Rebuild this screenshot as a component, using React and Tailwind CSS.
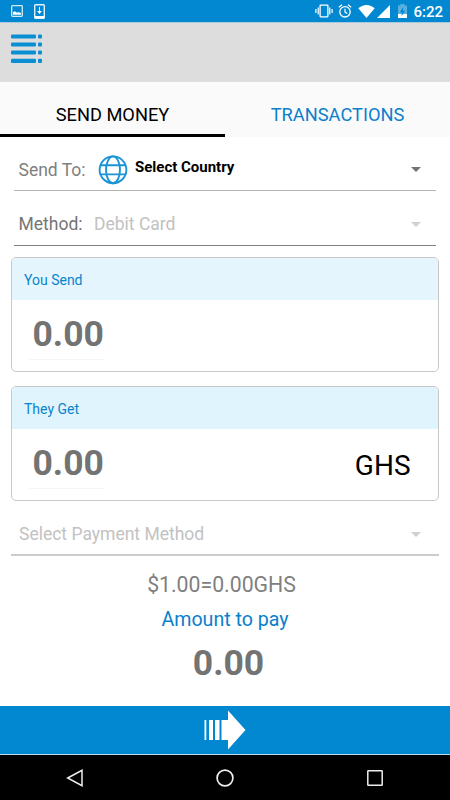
import React from 'react';

const StatusBar = () => (
  <div className="flex h-[22px] items-center bg-[#0288d0] pr-[7px] pl-[11px] text-white">
    <svg className="mr-[11px] h-3 w-3" viewBox="0 0 12 12" fill="none">
      <rect x="0.7" y="0.7" width="10.6" height="10.6" rx="0.8" stroke="#d3eaf7" strokeWidth="1.3" />
      <path d="M2 9.8V7.2l2-.9 2 1.4 1-.7L10 8v1.8z" fill="#fff" />
    </svg>
    <svg className="h-[15px] w-[11px]" viewBox="0 0 11 15" fill="none">
      <rect x="0.7" y="0.7" width="9.6" height="13.6" rx="0.8" stroke="#e3f2fa" strokeWidth="1.4" />
      <path d="M1 12h9v2H1z" fill="#fff" />
      <path d="M5 3h1v4h2L5.5 10 3 7h2z" fill="#fff" />
    </svg>
    <div className="flex-1" />
    <svg className="mr-[5px] h-[14px] w-[18px]" viewBox="0 0 18 14" fill="none" stroke="#fff">
      <rect x="5.1" y="1.2" width="7.8" height="11.6" rx="0.5" strokeWidth="1.3" />
      <path d="M3.2 3.5v7M14.8 3.5v7M0.9 5v4M17.1 5v4" strokeWidth="1.2" />
    </svg>
    <svg className="mr-[6px] h-[14px] w-[14px]" viewBox="0 0 14 14" fill="none" stroke="#fff">
      <circle cx="7" cy="7.8" r="5.2" strokeWidth="1.3" />
      <path d="M0.8 3.3L4 0.7M13.2 3.3L10 0.7M7 4.7v3.4l2.3 1.4" strokeWidth="1.2" />
    </svg>
    <svg className="mr-[2px] h-[13px] w-[17px]" viewBox="0 0 17 13">
      <path d="M0.3 3.3C2.5 1.3 5.4 0 8.5 0s6 1.3 8.2 3.3L8.5 13z" fill="#fff" />
    </svg>
    <svg className="mr-[8px] h-[13px] w-[13px]" viewBox="0 0 13 13">
      <path d="M13 0v13H0z" fill="#fff" />
    </svg>
    <svg className="mr-[6px] h-[14px] w-[9px]" viewBox="0 0 9 14">
      <path d="M0 1.5h2.5V0h4v1.5H9V10H0z" fill="#59b0df" />
      <path d="M0 10h9v4H0z" fill="#fff" />
      <path d="M5.3 3L1.9 8.2h2L3.6 12 7.2 6.8H5.1z" fill="#0288d0" />
    </svg>
    <span className="pt-[2px] text-[15px] leading-5 font-medium">6:22</span>
  </div>
);

const MenuIcon = () => (
  <svg className="h-[30px] w-8" viewBox="0 0 32 30" fill="#0b8fd4">
    {[0.4, 8.4, 16.4, 24.8].map((y) => (
      <g key={y}>
        <rect x="0" y={y} width="25" height="4.2" rx="1" />
        <rect x="27" y={y} width="4" height="4.2" rx="1" />
      </g>
    ))}
  </svg>
);

const Globe = () => (
  <svg className="h-[30px] w-[30px]" viewBox="0 0 30 30" fill="none" stroke="#1a94d6" strokeWidth="1.9">
    <circle cx="15" cy="14.8" r="13.4" />
    <ellipse cx="15" cy="14.8" rx="7" ry="13.4" />
    <path d="M2.6 10.2h24.8M2.6 19.4h24.8" />
  </svg>
);

const Caret = ({ className }) => (
  <svg className={`h-[5px] w-[10px] ${className}`} viewBox="0 0 10 5" fill="currentColor">
    <path d="M0 0h10L5 5z" />
  </svg>
);

const AmountCard = ({ title, titleClass, currency }) => (
  <div className="mx-[11px] h-[115px] overflow-hidden rounded-[5px] border border-[#c8c8c8] bg-white">
    <div className={`flex h-[42px] items-center pl-3 pt-[2px] text-[14px] text-[#0a84cc] ${titleClass}`}>
      {title}
    </div>
    <div className="flex items-start justify-between pr-[27.5px] pl-[17px]">
      <div className="h-[60px] w-[75px] border-b border-[#f5f5f5] pl-[3.5px] text-[35.5px] leading-[69px] font-bold text-[#737373]">
        0.00
      </div>
      {currency && <div className="text-[28px] leading-[73px] text-black">{currency}</div>}
    </div>
  </div>
);

const App = () => {
  return (
    <div className="flex h-[800px] w-[450px] flex-col overflow-hidden bg-white font-['Roboto',sans-serif]">
      <StatusBar />
      <header className="h-[60px] border-t border-[#a9c9dc] bg-[#dddddd] pt-[11px] pl-[11px]">
        <MenuIcon />
      </header>

      <nav className="flex h-[55px] bg-[#fafafa] text-[18.25px] leading-[66px]">
        <div className="w-[225px] border-b-[3px] border-black text-center text-black">SEND MONEY</div>
        <div className="w-[225px] text-center text-[#0a80cc]">TRANSACTIONS</div>
      </nav>

      <div className="mx-[14px] flex h-[54px] items-center border-b border-[#b5b5b5] pt-3 pl-1 text-[#808080]">
        <span className="w-[80px] pt-px pl-[0.5px] text-[17.5px]">Send To:</span>
        <Globe />
        <span className="mb-[4px] ml-[7px] flex-1 text-[15px] font-bold text-black">Select Country</span>
        <Caret className="mr-[15px] text-[#737373]" />
      </div>

      <div className="mx-[14px] flex h-[55px] items-center border-b border-[#808080] pt-[13px] pl-1 text-[17.5px]">
        <span className="w-[76px] pl-[0.5px] text-[#757575]">Method:</span>
        <span className="flex-1 text-[#c2c2c2]">Debit Card</span>
        <Caret className="mr-[15px] text-[#d0d0d0]" />
      </div>

      <div className="mt-[11px] flex flex-col gap-[14px]">
        <AmountCard title="You Send" titleClass="bg-[#e4f5fd]" />
        <AmountCard title="They Get" titleClass="bg-[#e0f4fd]" currency="GHS" />
      </div>

      <div className="mx-[11px] flex h-[55px] items-center border-b-2 border-[#cccccc] pt-[13px] pl-2 text-[17.5px] text-[#c2c2c2]">
        <span className="flex-1">Select Payment Method</span>
        <Caret className="mr-[18px] text-[#d0d0d0]" />
      </div>

      <div className="flex flex-1 flex-col items-center pt-[12px] pr-[7px]">
        <div className="text-[21.25px] leading-[34px] text-[#808080]">$1.00=0.00GHS</div>
        <div className="pl-[7px] text-[19.6px] leading-[35px] text-[#0a80cc]">Amount to pay</div>
        <div className="pl-[14px] text-[35.5px] leading-[53px] font-bold text-[#737373]">0.00</div>
      </div>

      <footer className="flex h-[48px] items-center justify-center bg-[#0288d0]">
        <svg className="h-10 w-[42px]" viewBox="0 0 42 40" fill="#fff">
          <path d="M0.5 10h1.8v20H0.5zM5 10h4v20H5zM11 10h4.5v20h-4.5zM17.5 10h6.5V0.5L41.5 20 24 39.5V30h-6.5z" />
        </svg>
      </footer>

      <div className="flex h-[46px] items-center justify-around border-t border-[#b9dcf0] bg-black">
        <svg className="h-[18px] w-[18px]" viewBox="0 0 18 18" fill="none" stroke="#eee" strokeWidth="1.5">
          <path d="M1.7 9L16 1.3v15.4z" />
        </svg>
        <svg className="h-[18px] w-[18px]" viewBox="0 0 18 18" fill="none" stroke="#eee" strokeWidth="1.7">
          <circle cx="9" cy="9" r="7.9" />
        </svg>
        <svg className="h-[18px] w-[18px]" viewBox="0 0 18 18" fill="none" stroke="#eee" strokeWidth="1.5">
          <rect x="1.8" y="1.8" width="14.4" height="14.4" rx="0.5" />
        </svg>
      </div>
    </div>
  );
};

export default App;
